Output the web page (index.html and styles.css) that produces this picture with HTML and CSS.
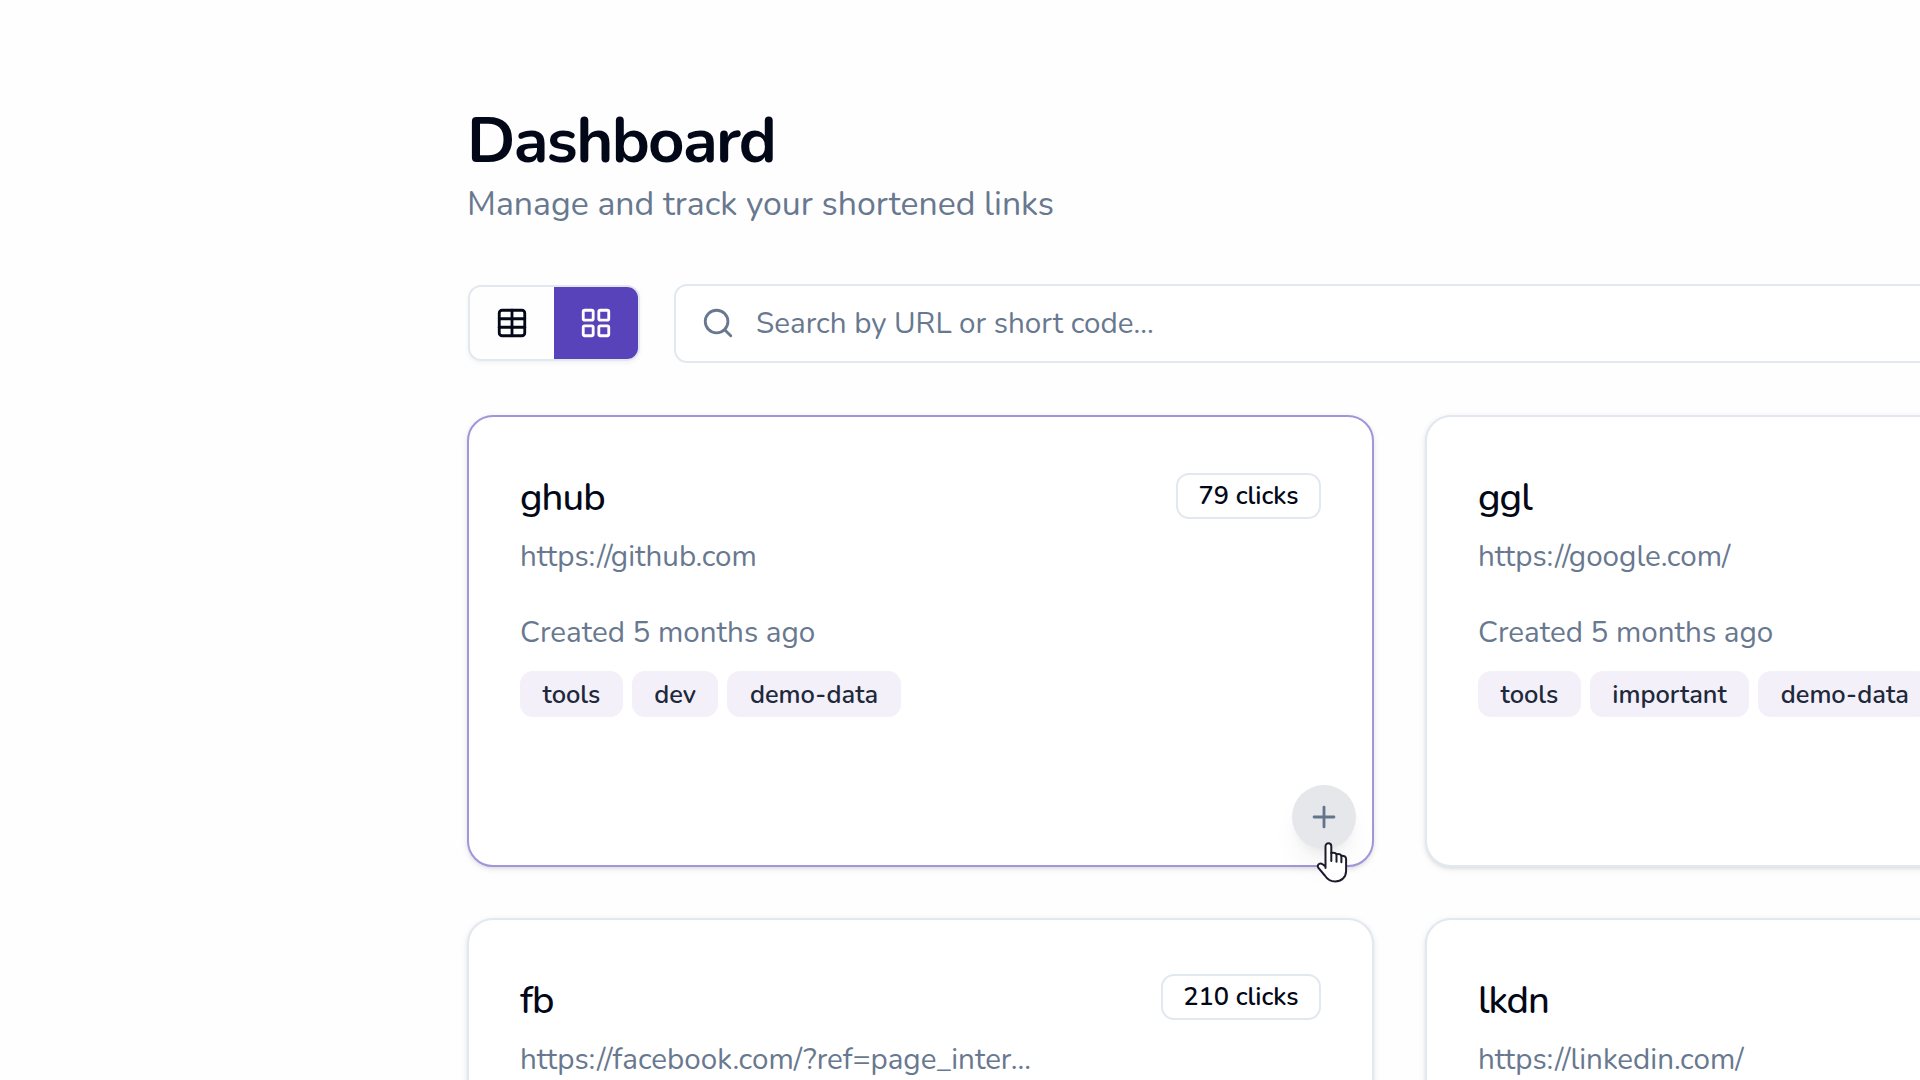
FILE: index.html
```html
<!DOCTYPE html>
<html lang="en">
<head>
<meta charset="utf-8">
<title>Dashboard</title>
<link rel="stylesheet" href="styles.css">
</head>
<body>
<main class="page">
  <header class="header">
    <h1 class="title">Dashboard</h1>
    <p class="subtitle">Manage and track your shortened links</p>
  </header>

  <div class="toolbar">
    <div class="toggle">
      <button class="toggle-btn" aria-label="Table view">
        <svg class="icon" viewBox="0 0 24 24"><path d="M12 3v18"/><rect width="18" height="18" x="3" y="3" rx="2"/><path d="M3 9h18"/><path d="M3 15h18"/></svg>
      </button>
      <button class="toggle-btn toggle-btn-active" aria-label="Grid view">
        <svg class="icon" viewBox="0 0 24 24"><rect width="7" height="7" x="3" y="3" rx="1"/><rect width="7" height="7" x="14" y="3" rx="1"/><rect width="7" height="7" x="14" y="14" rx="1"/><rect width="7" height="7" x="3" y="14" rx="1"/></svg>
      </button>
    </div>
    <div class="search">
      <svg class="icon" viewBox="0 0 24 24"><circle cx="11" cy="11" r="8"/><path d="m21 21-4.3-4.3"/></svg>
      <span>Search by URL or short code...</span>
    </div>
  </div>

  <section class="cards">
    <article class="card card-active">
      <div class="card-head">
        <h2 class="card-title">ghub</h2>
        <span class="badge">79 clicks</span>
      </div>
      <p class="url">https://github.com</p>
      <p class="created">Created 5 months ago</p>
      <div class="tags"><span class="tag">tools</span><span class="tag">dev</span><span class="tag">demo-data</span></div>
      <button class="fab" aria-label="Add">
        <svg class="icon" viewBox="0 0 24 24"><path d="M5 12h14"/><path d="M12 5v14"/></svg>
      </button>
      <svg class="cursor" viewBox="0 0 32 42"><path d="M9.5 27V5.2a2.9 2.9 0 0 1 5.8 0V12c2.400-.5 4.600 0 5.200 1.200 2.200-.4 4.200.1 4.900 1.500 2.700-.2 4.700 1 4.700 3.300V30c0 6.200-4.600 10.500-11 10.500-4.700 0-7.800-2.200-10.300-6L2.200 26.600c-1.200-2.200.3-4.200 2.500-4.200 1.800 0 3.300 1.600 4.800 3.200"/><path d="M15.300 12v8M20.500 13.200v7.500M25.400 14.700v6.500"/></svg>
    </article>

    <article class="card">
      <div class="card-head">
        <h2 class="card-title">ggl</h2>
      </div>
      <p class="url">https://google.com/</p>
      <p class="created">Created 5 months ago</p>
      <div class="tags"><span class="tag">tools</span><span class="tag">important</span><span class="tag">demo-data</span></div>
    </article>

    <article class="card">
      <div class="card-head">
        <h2 class="card-title">fb</h2>
        <span class="badge badge-high">210 clicks</span>
      </div>
      <p class="url">https://facebook.com/?ref=page_inter...</p>
    </article>

    <article class="card">
      <div class="card-head">
        <h2 class="card-title">lkdn</h2>
      </div>
      <p class="url">https://linkedin.com/</p>
    </article>
  </section>
</main>
</body>
</html>
```
FILE: styles.css
```css
* { box-sizing: border-box; }

body {
  margin: 0;
  height: 1080px;
  overflow: hidden;
  background: #fefefe;
  color: #020817;
  font-family: Nunito, Lato, sans-serif;
}

h1, h2, p { margin: 0; font-weight: inherit; }

button {
  margin: 0;
  padding: 0;
  border: 0;
  background: none;
  color: inherit;
}

.page {
  width: 1864px;
  height: 1080px;
  margin-left: 467px;
  padding-top: 103px;
}

.title {
  font-size: 63.5px;
  line-height: 76px;
  font-weight: 700;
  letter-spacing: -0.026em;
}

.subtitle {
  font-size: 33.8px;
  line-height: 50px;
  color: #68788f;
}

.toolbar {
  display: flex;
  align-items: center;
  gap: 34px;
  height: 79px;
  margin-top: 55px;
}

.icon {
  width: 34px;
  height: 34px;
  flex: none;
  fill: none;
  stroke: currentColor;
  stroke-width: 2;
  stroke-linecap: round;
  stroke-linejoin: round;
}

.toggle {
  display: flex;
  width: 172px;
  height: 76px;
  margin: 0 0 1px 1px;
  border: 2px solid #e2e8f0;
  border-radius: 13px;
  overflow: hidden;
  box-shadow: 0 2px 4px rgba(0, 0, 0, 0.05);
}

.toggle-btn {
  display: flex;
  flex: 1;
  align-items: center;
  justify-content: center;
}

.toggle-btn-active {
  background: #5843bb;
  color: #fff;
}

.search {
  display: flex;
  flex: 1;
  align-items: center;
  gap: 21px;
  height: 79px;
  padding: 0 0 1px 25px;
  border: 2px solid #e2e8f0;
  border-radius: 13px;
  background: #fff;
  color: #68788f;
  font-size: 29.6px;
}

.cards {
  display: grid;
  grid-template-columns: 907px 907px;
  grid-auto-rows: 452px;
  gap: 51px;
  margin-top: 52px;
}

.card {
  position: relative;
  padding: 51px 51px 0;
  border: 2px solid #e2e8f0;
  border-radius: 26px;
  background: #fff;
  box-shadow: 0 2px 6px rgba(0, 0, 0, 0.1), 0 2px 4px -2px rgba(0, 0, 0, 0.1);
}

.card-active { border-color: #a394dc; }

.card-head {
  display: flex;
  align-items: flex-start;
  justify-content: space-between;
  height: 59.5px;
}

.card-title {
  font-size: 38.25px;
  line-height: 59.5px;
  font-weight: 500;
  letter-spacing: -0.025em;
}

.badge,
.tag {
  height: 46px;
  padding: 0 20.5px;
  border: 2px solid transparent;
  border-radius: 13px;
  font-size: 25.4px;
  line-height: 44px;
  font-weight: 600;
}

.badge {
  margin-top: 5px;
  border-color: #e2e8f0;
  line-height: 41px;
}

.badge-high { margin-top: 3px; }

.url,
.created {
  font-size: 29.6px;
  line-height: 42.5px;
  color: #68788f;
}

.url { margin-top: 7.5px; }

.created { margin-top: 33.5px; }

.tags {
  display: flex;
  gap: 9px;
  margin-top: 17px;
}

.tag {
  background: #f3f0f9;
  color: #1e293b;
}

.fab {
  position: absolute;
  right: 16.5px;
  bottom: 16px;
  display: flex;
  align-items: center;
  justify-content: center;
  width: 64px;
  height: 64px;
  border-radius: 50%;
  background: #e5e7eb;
  color: #64748b;
  box-shadow: 0 20px 32px -6px rgba(0, 0, 0, 0.06), 0 8px 13px -8px rgba(0, 0, 0, 0.1);
}

.cursor {
  position: absolute;
  right: 24px;
  bottom: -18px;
  width: 32px;
  height: 42px;
  fill: #fff;
  stroke: #1c1c2e;
  stroke-width: 2;
  stroke-linecap: round;
  stroke-linejoin: round;
}
```
